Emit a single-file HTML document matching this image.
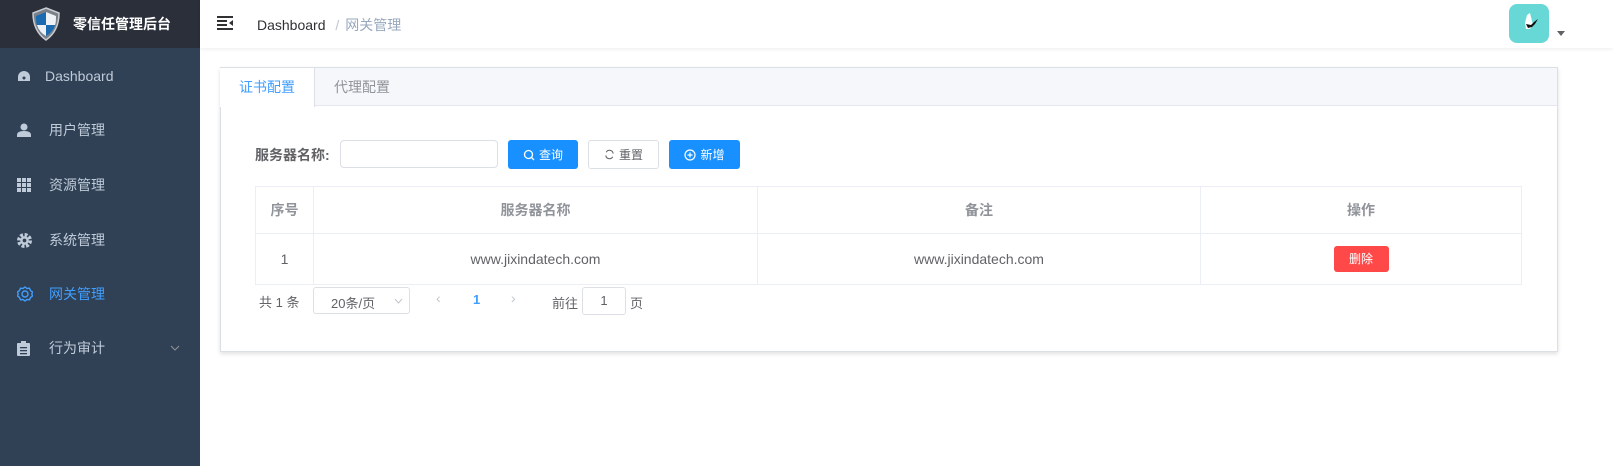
<!DOCTYPE html>
<html><head><meta charset="utf-8"><style>
*{box-sizing:border-box;margin:0;padding:0}
body{width:1613px;height:466px;overflow:hidden;background:#fff;font-family:"Liberation Sans","Noto Sans CJK SC",sans-serif;font-size:14px;color:#606266;position:relative}
.side{position:absolute;left:0;top:0;width:200px;height:466px;background:#304156}
.logo{height:48px;background:#2b2f3a;display:flex;align-items:center;color:#fff;font-weight:bold;font-size:14px}
.mi{position:absolute;left:0;width:200px;height:56px;display:flex;align-items:center;color:#bfcbd9;font-size:14px}
.mi svg{position:absolute;left:17px}
.mi span{position:absolute;left:49px}
.hdr{position:absolute;left:200px;top:0;right:0;height:48px;box-shadow:0 1px 4px rgba(0,21,41,.08)}
.card{position:absolute;left:220px;top:67px;width:1338px;height:285px;border:1px solid #dcdfe6;box-shadow:0 2px 4px rgba(0,0,0,.12)}
.tabs{height:38px;background:#f5f7fa;border-bottom:1px solid #e4e7ed;position:relative}
.tab{position:absolute;top:0;height:38px;line-height:38px;font-size:14px}
.btn{position:absolute;top:140px;height:29px;border-radius:3px;font-size:12px;display:flex;align-items:center;justify-content:center;gap:4px}
.tb{position:absolute;left:255px;top:186px;width:1267px;border-collapse:collapse;font-size:14px}
.tb td{border:1px solid #ebeef5;text-align:center;color:#606266}
.tb tr.h td{height:47px;color:#909399;font-weight:bold}
.tb tr.r td{height:51px}
</style></head><body>
<div class="side">
 <div class="logo">
  <svg style="margin-left:31px" width="30" height="34" viewBox="0 0 30 34"><path d="M15 1 L28 6 Q28 24 15 33 Q2 24 2 6Z" fill="#7a8088" stroke="#c8cdd3" stroke-width="1.5"/><path d="M15 5 L25 9 Q25 16 24 18 L15 18Z" fill="#eef2f6"/><path d="M15 5 L5 9 Q5 16 6 18 L15 18Z" fill="#1c6bb0"/><path d="M6 18 L15 18 L15 29 Q8 25 6 18Z" fill="#eef2f6"/><path d="M24 18 L15 18 L15 29 Q22 25 24 18Z" fill="#1c6bb0"/></svg>
  <span style="margin-left:12px">零信任管理后台</span>
 </div>
 <div class="mi" style="top:48px"><svg width="14" height="12" viewBox="0 0 14 12"><path d="M7 1A6 6 0 0 0 1 7v4h12V7A6 6 0 0 0 7 1z" fill="#bfcbd9"/><circle cx="7" cy="8" r="1.5" fill="#304156"/></svg><span style="left:45px">Dashboard</span></div>
 <div class="mi" style="top:102px"><svg width="14" height="14" viewBox="0 0 14 14"><circle cx="7" cy="4" r="3.5" fill="#bfcbd9"/><path d="M0 14v-2q0-4 7-4t7 4v2z" fill="#bfcbd9"/></svg><span>用户管理</span></div>
 <div class="mi" style="top:157px"><svg width="14" height="14" viewBox="0 0 14 14" fill="#bfcbd9"><rect width="4" height="4"/><rect x="5" width="4" height="4"/><rect x="10" width="4" height="4"/><rect y="5" width="4" height="4"/><rect x="5" y="5" width="4" height="4"/><rect x="10" y="5" width="4" height="4"/><rect y="10" width="4" height="4"/><rect x="5" y="10" width="4" height="4"/><rect x="10" y="10" width="4" height="4"/></svg><span>资源管理</span></div>
 <div class="mi" style="top:212px"><svg width="15" height="15" viewBox="0 0 16 16"><circle cx="8" cy="8" r="6" fill="none" stroke="#bfcbd9" stroke-width="4" stroke-dasharray="3 1.7"/><circle cx="8" cy="8" r="4.5" fill="#bfcbd9"/><circle cx="8" cy="8" r="2" fill="#304156"/></svg><span>系统管理</span></div>
 <div class="mi" style="top:266px;color:#409eff"><svg width="16" height="16" viewBox="0 0 16 16"><path d="M8 1l2 1.5 2.5-.3 1 2.3 2 1.5-.7 2 .7 2-2 1.5-1 2.3-2.5-.3L8 15l-2-1.5-2.5.3-1-2.3-2-1.5.7-2-.7-2 2-1.5 1-2.3 2.5.3z" fill="none" stroke="#409eff" stroke-width="1.4"/><circle cx="8" cy="8" r="3" fill="none" stroke="#409eff" stroke-width="1.4"/></svg><span>网关管理</span></div>
 <div class="mi" style="top:320px"><svg width="13" height="15" viewBox="0 0 13 15"><rect x="0" y="2" width="13" height="13" rx="1" fill="#bfcbd9"/><rect x="4" y="0" width="5" height="3" fill="#bfcbd9"/><rect x="3" y="6" width="7" height="1.3" fill="#304156"/><rect x="3" y="9" width="7" height="1.3" fill="#304156"/><rect x="3" y="12" width="7" height="1.3" fill="#304156"/></svg><span>行为审计</span><svg style="left:170px" width="10" height="6" viewBox="0 0 10 6"><path d="M1 1l4 4 4-4" fill="none" stroke="#909399"/></svg></div>
</div>
<div class="hdr">
 <svg style="position:absolute;left:17px;top:16px" width="16" height="14" viewBox="0 0 16 14" fill="#303133"><rect width="16" height="2"/><rect y="4" width="10" height="2"/><rect y="8" width="10" height="2"/><rect y="12" width="16" height="2"/><path d="M16 4v6l-4-3z"/></svg>
 <div style="position:absolute;left:57px;top:15px;font-size:14px;color:#303133">Dashboard <span style="color:#c0c4cc;margin:0 6px">/</span><span style="color:#97a8be">网关管理</span></div>
 <div style="position:absolute;left:1309px;top:4px;width:40px;height:39px;border-radius:8px;background:#68d8d6"><svg width="40" height="39" viewBox="0 0 40 39"><path d="M18 11l3-2 1 4 2 8-3 4h-4l-1-6z" fill="#fff"/><path d="M17 20l5 1 3-3 4-3-3 5-3 3-4 1z" fill="#111"/></svg></div>
 <svg style="position:absolute;left:1357px;top:31px" width="8" height="5" viewBox="0 0 8 5"><path d="M0 0h8L4 5z" fill="#606266"/></svg>
</div>
<div class="card">
 <div class="tabs">
  <div class="tab" style="left:-1px;width:95px;background:#fff;height:39px;border-right:1px solid #dcdfe6;color:#409eff;text-align:center">证书配置</div>
  <div class="tab" style="left:113px;color:#909399">代理配置</div>
 </div>
</div>
<div style="position:absolute;left:255px;top:145px;font-size:14px;font-weight:bold;color:#606266">服务器名称:</div>
<div style="position:absolute;left:340px;top:140px;width:158px;height:28px;border:1px solid #dcdfe6;border-radius:4px"></div>
<div class="btn" style="left:508px;width:70px;background:#1890ff;color:#fff"><svg width="12" height="12" viewBox="0 0 12 12"><circle cx="5.5" cy="5.5" r="4" fill="none" stroke="#fff" stroke-width="1.3"/><path d="M8.5 8.5l2.5 2.5" stroke="#fff" stroke-width="1.3"/></svg>查询</div>
<div class="btn" style="left:588px;width:71px;border:1px solid #dcdfe6;color:#606266"><svg width="11" height="11" viewBox="0 0 12 12"><path d="M10 5A4 4 0 0 0 2.5 3.5M2 7a4 4 0 0 0 7.5 1.5" fill="none" stroke="#606266" stroke-width="1.2"/></svg>重置</div>
<div class="btn" style="left:669px;width:71px;background:#1890ff;color:#fff"><svg width="12" height="12" viewBox="0 0 12 12"><circle cx="6" cy="6" r="5" fill="none" stroke="#fff" stroke-width="1.2"/><path d="M6 3.5v5M3.5 6h5" stroke="#fff" stroke-width="1.2"/></svg>新增</div>
<table class="tb">
 <tr class="h"><td style="width:58px">序号</td><td style="width:444px">服务器名称</td><td style="width:443px">备注</td><td>操作</td></tr>
 <tr class="r"><td>1</td><td>www.jixindatech.com</td><td>www.jixindatech.com</td><td><span style="display:inline-block;width:55px;height:26px;line-height:26px;background:#ff4949;color:#fff;border-radius:3px;font-size:12px">删除</span></td></tr>
</table>
<div style="position:absolute;left:259px;top:292px;font-size:13px">共 1 条</div>
<div style="position:absolute;left:313px;top:287px;width:97px;height:27px;border:1px solid #dcdfe6;border-radius:3px;font-size:13px;padding:5px 0 0 17px">20条/页<svg style="position:absolute;right:6px;top:11px" width="9" height="5" viewBox="0 0 9 5"><path d="M1 0l3.5 4L8 0" fill="none" stroke="#c0c4cc"/></svg></div>
<div style="position:absolute;left:436px;top:290px;color:#c0c4cc;font-size:14px">‹</div>
<div style="position:absolute;left:473px;top:292px;color:#409eff;font-size:13px;font-weight:bold">1</div>
<div style="position:absolute;left:511px;top:290px;color:#c0c4cc;font-size:14px">›</div>
<div style="position:absolute;left:552px;top:293px;font-size:13px">前往</div>
<div style="position:absolute;left:582px;top:287px;width:44px;height:28px;border:1px solid #dcdfe6;border-radius:3px;text-align:center;line-height:26px;font-size:13px">1</div>
<div style="position:absolute;left:630px;top:293px;font-size:13px">页</div>
</body></html>
